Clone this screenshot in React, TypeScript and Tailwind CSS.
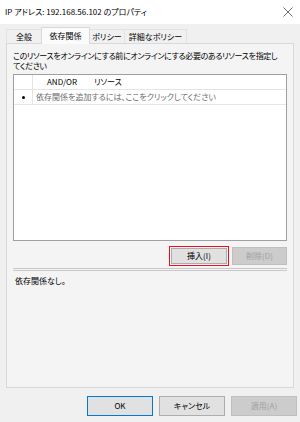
import React from "react";

const jp = { fontFamily: '"Noto Sans CJK JP", "Noto Sans", sans-serif' };

export default function App() {
  return (
    <div
      className="w-[300px] h-[422px] bg-[#f0f0f0] flex flex-col text-black overflow-hidden [font-feature-settings:'palt']"
      style={jp}
    >
      {/* Title bar */}
      <div className="h-[24px] bg-white flex items-center justify-between pl-[5px] pr-[7px] shrink-0">
        <span className="text-[8px] leading-none">IP アドレス: 192.168.56.102 のプロパティ</span>
        <svg width="10" height="10" viewBox="0 0 10 10" className="text-[#444]">
          <path d="M0.5 0.5 L9.5 9.5 M9.5 0.5 L0.5 9.5" stroke="currentColor" strokeWidth="0.8" />
        </svg>
      </div>

      {/* Tabs */}
      <div className="flex items-end pl-[6px] h-[18px] mt-[1px] shrink-0 text-[8px]">
        <div className="w-[35px] h-[14px] flex items-center justify-center border-t border-l border-[#e3e3e3]">全般</div>
        <div className="w-[49px] h-[17px] flex items-center justify-center border-t border-l border-r border-[#d9d9d9] bg-[#fbfbfb] relative top-[1px] z-10">依存関係</div>
        <div className="w-[35px] h-[14px] flex items-center justify-center border-t border-r border-[#e3e3e3]">ポリシー</div>
        <div className="w-[62px] h-[14px] flex items-center justify-center border-t border-r border-[#e3e3e3]">詳細なポリシー</div>
      </div>

      {/* Panel */}
      <div className="mx-[6px] h-[345px] border border-[#d9d9d9] bg-[#f4f4f4] flex flex-col shrink-0">
        <div className="px-[6px] pt-[7px] text-[8px] leading-[10px] h-[30px] whitespace-nowrap tracking-[-0.35px]">
          <div>このリソースをオンラインにする前にオンラインにする必要のあるリソースを指定し</div>
          <div>てください</div>
        </div>

        {/* List */}
        <div className="mx-[6px] h-[167px] border border-[#a0a0a0] bg-white flex flex-col">
          <div className="flex h-[15px] border-b border-[#e5e5e5] text-[8px]">
            <div className="w-[19px] border-r border-[#e5e5e5]" />
            <div className="w-[61px] pl-[14px] flex items-center">AND/OR</div>
            <div className="flex items-center">リソース</div>
          </div>
          <div className="flex h-[15px] border-b border-[#e5e5e5] text-[8px]">
            <div className="w-[19px] border-r border-[#e5e5e5] flex items-center justify-center">
              <span className="w-[3px] h-[3px] rounded-full bg-black" />
            </div>
            <div className="pl-[3px] flex items-center text-[#6d6d6d]">依存関係を追加するには、ここをクリックしてください</div>
          </div>
        </div>

        {/* Buttons */}
        <div className="flex justify-end gap-[3px] mt-[5px] mr-[6px]">
          <div className="w-[60px] h-[20px] border border-[#e81123] p-[1px]">
            <div className="w-full h-full bg-[#e1e1e1] border border-[#adadad] flex items-center justify-center text-[8px]">挿入(I)</div>
          </div>
          <div className="w-[55px] h-[20px] flex items-center justify-center">
            <div className="w-full h-[18px] bg-[#cccccc] border border-[#bfbfbf] flex items-center justify-center text-[8px] text-[#a0a0a0]">削除(D)</div>
          </div>
        </div>

        <div className="mx-[6px] mt-[2px] h-[3px] border-t border-b border-[#c8c8c8] bg-[#f4f4f4]" />

        <div className="px-[8px] pt-[4px] text-[8px]">依存関係なし。</div>
      </div>

      {/* Bottom buttons */}
      <div className="flex justify-end gap-[6px] pr-[3px] mt-[8px]">
        <div className="w-[66px] h-[20px] border border-[#0078d7] bg-[#e1e1e1] flex items-center justify-center text-[8px]">OK</div>
        <div className="w-[66px] h-[20px] border border-[#adadad] bg-[#e1e1e1] flex items-center justify-center text-[8px]">キャンセル</div>
        <div className="w-[66px] h-[20px] border border-[#bfbfbf] bg-[#cccccc] flex items-center justify-center text-[8px] text-[#a0a0a0]">適用(A)</div>
      </div>
    </div>
  );
}
